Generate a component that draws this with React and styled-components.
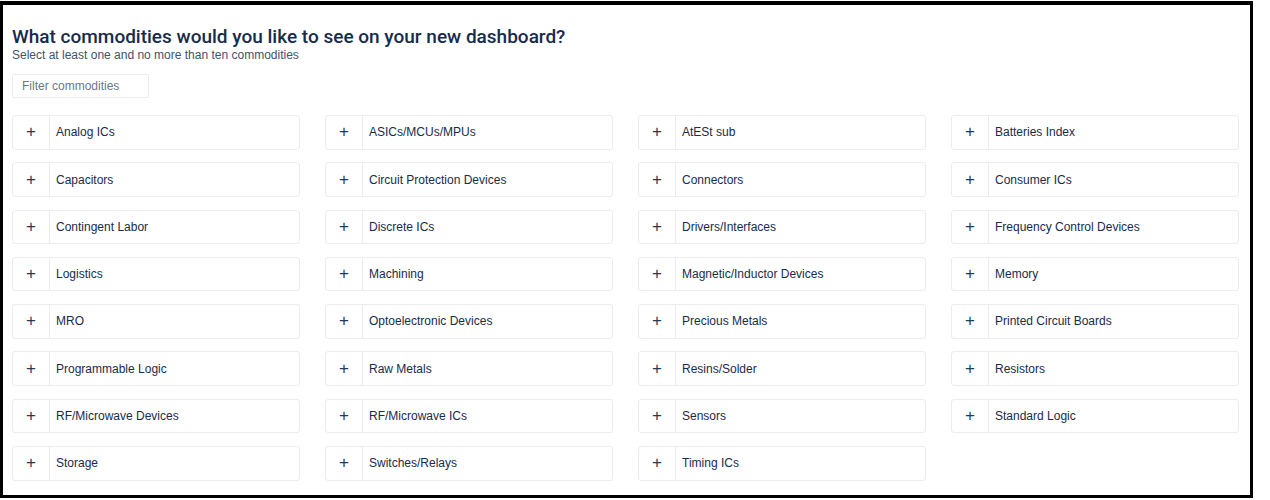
import React from 'react';
import styled, { createGlobalStyle } from 'styled-components';

const commodities = [
  'Analog ICs', 'ASICs/MCUs/MPUs', 'AtESt sub', 'Batteries Index',
  'Capacitors', 'Circuit Protection Devices', 'Connectors', 'Consumer ICs',
  'Contingent Labor', 'Discrete ICs', 'Drivers/Interfaces', 'Frequency Control Devices',
  'Logistics', 'Machining', 'Magnetic/Inductor Devices', 'Memory',
  'MRO', 'Optoelectronic Devices', 'Precious Metals', 'Printed Circuit Boards',
  'Programmable Logic', 'Raw Metals', 'Resins/Solder', 'Resistors',
  'RF/Microwave Devices', 'RF/Microwave ICs', 'Sensors', 'Standard Logic',
  'Storage', 'Switches/Relays', 'Timing ICs',
];

const GlobalStyle = createGlobalStyle`
  body {
    margin: 0;
    background: #fff;
    font-family: "Liberation Sans", Arial, sans-serif;
  }
`;

const App = () => {
  return (
    <>
      <GlobalStyle />
      <Frame>
        <Header>
          <Title>What commodities would you like to see on your new dashboard?</Title>
          <Subtitle>Select at least one and no more than ten commodities</Subtitle>
        </Header>
        <FilterInput placeholder="Filter commodities" />
        <Grid>
          {commodities.map((name) => (
            <Card key={name}>
              <AddButton>+</AddButton>
              <CardLabel>{name}</CardLabel>
            </Card>
          ))}
        </Grid>
      </Frame>
    </>
  );
};

const Frame = styled.div`
  box-sizing: border-box;
  width: 1253px;
  height: 497px;
  margin-top: 1px;
  border: 3px solid #000;
  border-top-width: 4px;
  padding: 20px 11px 0 9px;
  display: flex;
  flex-direction: column;
`;

const Header = styled.div`
  display: flex;
  flex-direction: column;
`;

const Title = styled.h1`
  margin: 0;
  font-family: Roboto, "Liberation Sans", sans-serif;
  font-size: 19px;
  line-height: 23px;
  font-weight: 500;
  color: #172b4d;
`;

const Subtitle = styled.p`
  margin: 0;
  font-size: 12px;
  line-height: 14px;
  color: #42526e;
`;

const FilterInput = styled.input`
  box-sizing: border-box;
  width: 137px;
  height: 24px;
  margin-top: 12px;
  padding: 0 9px;
  border: 1px solid #ebecf0;
  border-radius: 2px;
  font-family: inherit;
  font-size: 12px;
  color: #172b4d;
  outline: none;
  &::placeholder {
    color: #6b778c;
  }
`;

const Grid = styled.div`
  margin-top: 17px;
  display: grid;
  grid-template-columns: repeat(4, 1fr);
  column-gap: 25px;
  row-gap: 12.8px;
`;

const Card = styled.div`
  box-sizing: border-box;
  height: 34.5px;
  display: flex;
  align-items: center;
  border: 1px solid #ebecf0;
  border-radius: 3px;
  background: #fff;
`;

const AddButton = styled.span`
  width: 36px;
  height: 100%;
  display: flex;
  align-items: center;
  justify-content: center;
  border-right: 1px solid #ebecf0;
  font-size: 17px;
  color: #253858;
`;

const CardLabel = styled.span`
  padding-left: 6px;
  font-size: 12px;
  color: #172b4d;
`;

export default App;
